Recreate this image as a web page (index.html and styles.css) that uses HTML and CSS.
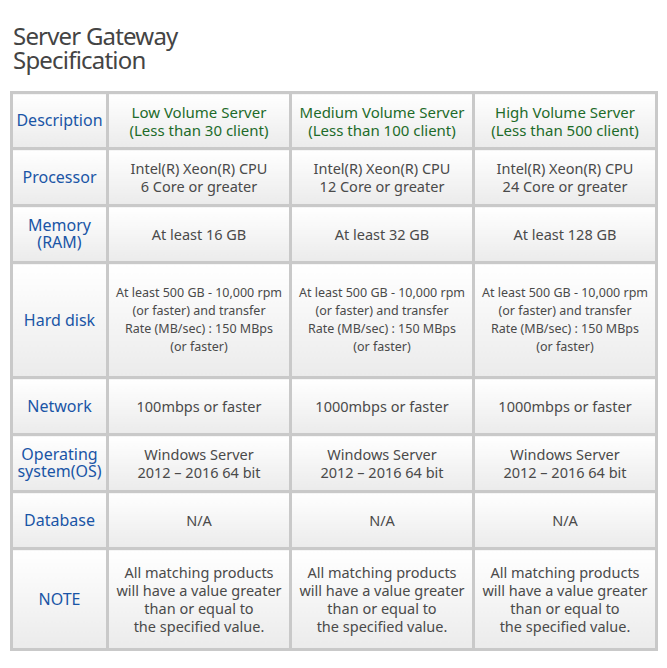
FILE: index.html
```html
<!DOCTYPE html>
<html lang="en">
<head>
  <meta charset="UTF-8">
  <title>Server Gateway Specification</title>
  <link rel="stylesheet" href="styles.css">
</head>
<body>
  <h1 class="title">Server Gateway<br>Specification</h1>

  <table class="spec">
    <tr class="row-head">
      <th class="label">Description</th>
      <th>Low Volume Server<br>(Less than 30 client)</th>
      <th>Medium Volume Server<br>(Less than 100 client)</th>
      <th>High Volume Server<br>(Less than 500 client)</th>
    </tr>
    <tr class="row-std">
      <td class="label">Processor</td>
      <td>Intel(R) Xeon(R) CPU<br>6 Core or greater</td>
      <td>Intel(R) Xeon(R) CPU<br>12 Core or greater</td>
      <td>Intel(R) Xeon(R) CPU<br>24 Core or greater</td>
    </tr>
    <tr class="row-std">
      <td class="label">Memory<br>(RAM)</td>
      <td>At least 16 GB</td>
      <td>At least 32 GB</td>
      <td>At least 128 GB</td>
    </tr>
    <tr class="row-disk">
      <td class="label">Hard disk</td>
      <td class="small">At least 500 GB - 10,000 rpm<br>(or faster) and transfer<br>Rate (MB/sec) : 150 MBps<br>(or faster)</td>
      <td class="small">At least 500 GB - 10,000 rpm<br>(or faster) and transfer<br>Rate (MB/sec) : 150 MBps<br>(or faster)</td>
      <td class="small">At least 500 GB - 10,000 rpm<br>(or faster) and transfer<br>Rate (MB/sec) : 150 MBps<br>(or faster)</td>
    </tr>
    <tr class="row-std">
      <td class="label">Network</td>
      <td>100mbps or faster</td>
      <td>1000mbps or faster</td>
      <td>1000mbps or faster</td>
    </tr>
    <tr class="row-std">
      <td class="label">Operating<br>system(OS)</td>
      <td>Windows Server<br>2012 – 2016 64 bit</td>
      <td>Windows Server<br>2012 – 2016 64 bit</td>
      <td>Windows Server<br>2012 – 2016 64 bit</td>
    </tr>
    <tr class="row-std">
      <td class="label">Database</td>
      <td>N/A</td>
      <td>N/A</td>
      <td>N/A</td>
    </tr>
    <tr class="row-note">
      <td class="label">NOTE</td>
      <td>All matching products<br>will have a value greater<br>than or equal to<br>the specified value.</td>
      <td>All matching products<br>will have a value greater<br>than or equal to<br>the specified value.</td>
      <td>All matching products<br>will have a value greater<br>than or equal to<br>the specified value.</td>
    </tr>
  </table>
</body>
</html>
```

FILE: styles.css
```css
body {
  margin: 0;
  padding: 0;
  background-color: #fff;
  font-family: "Noto Sans", "Open Sans", sans-serif;
}

.title {
  margin: 0;
  padding: 24px 0 0 13px;
  font-size: 24px;
  font-weight: normal;
  line-height: 24px;
  letter-spacing: -0.8px;
  color: #444;
}

.spec {
  margin: 19px 0 0 10px;
  width: 648px;
  border-collapse: collapse;
  table-layout: fixed;
}

.spec th,
.spec td {
  border: 3px solid #c9c9c9;
  background: linear-gradient(#ffffff, #ebebeb);
  text-align: center;
  vertical-align: middle;
  padding: 0;
  font-size: 14.5px;
  font-weight: normal;
  line-height: 18px;
  color: #4a4a4a;
}

.spec th {
  font-size: 15px;
  color: #1d6b2a;
}

.spec .label {
  width: 93px;
  color: #1a55a6;
  font-size: 16px;
  line-height: 17px;
}

.spec .small {
  font-size: 12.5px;
}

.row-head th { height: 53px; }
.row-std td { height: 54px; }
.row-disk td { height: 112px; }
.row-note td { height: 98px; }
```
